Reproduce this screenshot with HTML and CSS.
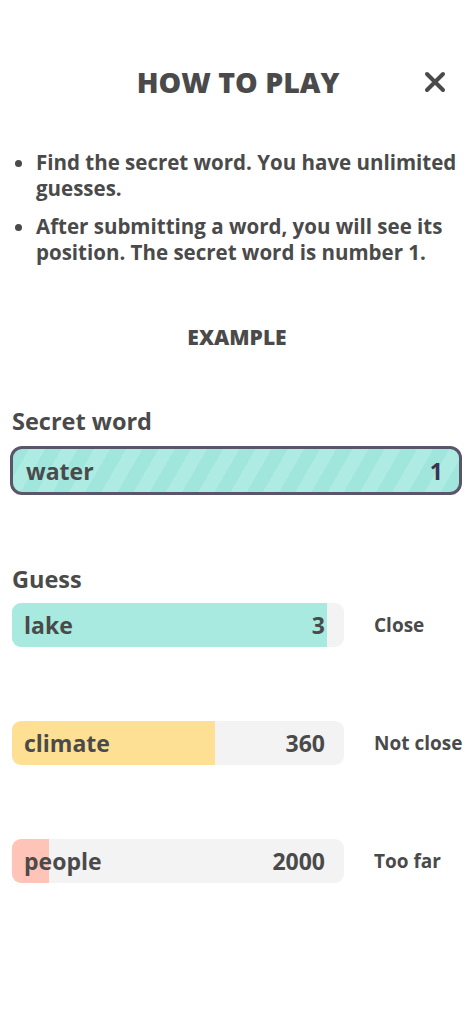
FILE: index.html
```html
<!DOCTYPE html>
<html lang="en">
<head>
    <meta charset="UTF-8">
    <meta name="viewport" content="width=device-width, initial-scale=1.0">
    <title>How to play</title>
    <link rel="stylesheet" href="styles.css">
</head>
<body>
    <div class="modal">
        <!-- Header -->
        <div class="header">
            <h1>HOW TO PLAY</h1>
            <button class="close-btn" aria-label="Close">
                <svg width="22" height="22" viewBox="0 0 22 22">
                    <path d="M3 3 L19 19 M19 3 L3 19" stroke="#4a4a4a" stroke-width="4" stroke-linecap="round"/>
                </svg>
            </button>
        </div>

        <ul class="rules">
            <li>Find the secret word. You have unlimited guesses.</li>
            <li>After submitting a word, you will see its position. The secret word is number 1.</li>
        </ul>

        <h2>EXAMPLE</h2>

        <h3 class="label secret-label">Secret word</h3>
        <div class="secret-bar">
            <span class="word">water</span>
            <span class="rank">1</span>
        </div>

        <h3 class="label guess-label">Guess</h3>
        <div class="guess-row">
            <div class="bar">
                <div class="fill close" style="width: 95%;"></div>
                <span class="word">lake</span>
                <span class="rank">3</span>
            </div>
            <span class="status">Close</span>
        </div>

        <div class="guess-row">
            <div class="bar">
                <div class="fill medium" style="width: 61%;"></div>
                <span class="word">climate</span>
                <span class="rank">360</span>
            </div>
            <span class="status">Not close</span>
        </div>

        <div class="guess-row">
            <div class="bar">
                <div class="fill far" style="width: 11%;"></div>
                <span class="word">people</span>
                <span class="rank">2000</span>
            </div>
            <span class="status">Too far</span>
        </div>
    </div>
</body>
</html>
```

FILE: styles.css
```css
body {
    margin: 0;
    background-color: #ffffff;
    font-family: "Open Sans", "Lato", sans-serif;
    font-weight: bold;
    color: #4a4a4a;
}

.modal {
    padding: 0 10px 0 12px;
}

.header {
    position: relative;
    padding-top: 60px;
    text-align: center;
}

h1 {
    margin: 0;
    font-size: 28.5px;
    line-height: 44px;
    font-weight: 800;
    padding-left: 2px;
}

.close-btn {
    position: absolute;
    right: 16px;
    top: 71px;
    padding: 0;
    border: none;
    background: none;
    cursor: pointer;
}

.close-btn svg {
    display: block;
}

.rules {
    margin: 45px 0 0 0;
    padding: 0 0 0 24px;
    font-size: 20.5px;
    line-height: 26px;
}

.rules li {
    margin-bottom: 12px;
}

.rules li:last-child {
    margin-bottom: 0;
}

h2 {
    margin: 59px 0 0 0;
    text-align: center;
    font-size: 21px;
    line-height: 26px;
    font-weight: 800;
}

.label {
    margin: 0;
    font-size: 23.5px;
    line-height: 30px;
    font-weight: 700;
}

.secret-label {
    margin-top: 56px;
}

.guess-label {
    margin-top: 69px;
}

.word,
.rank {
    position: relative;
    font-size: 23px;
    font-weight: 700;
}

.secret-bar {
    margin: 10px 0 0 -2px;
    height: 43px;
    border: 3px solid #5a566a;
    border-radius: 12px;
    padding: 0 16px 0 13px;
    display: flex;
    align-items: center;
    justify-content: space-between;
    background: repeating-linear-gradient(120deg, #a0e6dc 0 14px, #aeebe3 14px 28px);
}

.secret-bar .rank {
    color: #3c3350;
}

.guess-row {
    display: flex;
    align-items: center;
    gap: 30px;
    margin-top: 74px;
}

.guess-label + .guess-row {
    margin-top: 9px;
}

.bar {
    position: relative;
    width: 332px;
    height: 44px;
    border-radius: 9px;
    background-color: #f3f3f3;
    overflow: hidden;
    display: flex;
    align-items: center;
    justify-content: space-between;
    padding: 0 19px 0 12px;
    box-sizing: border-box;
    flex-shrink: 0;
}

.fill {
    position: absolute;
    left: 0;
    top: 0;
    bottom: 0;
}

.fill.close {
    background-color: #a8e9e0;
}

.fill.medium {
    background-color: #fde093;
}

.fill.far {
    background-color: #fec4b7;
}

.status {
    font-size: 19px;
    font-weight: 700;
    white-space: nowrap;
}
```
